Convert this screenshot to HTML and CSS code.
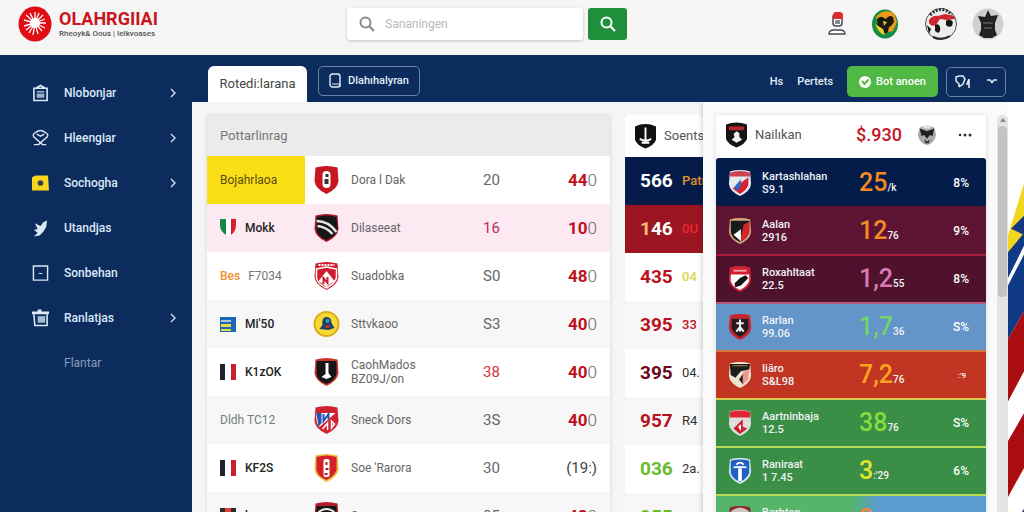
FILE: index.html
```html
<!DOCTYPE html>
<html lang="id">
<head>
<meta charset="utf-8">
<meta name="viewport" content="width=device-width, initial-scale=1">
<title>Olahrgilai</title>
<link rel="stylesheet" href="styles.css">
</head>
<body>
<svg class="defs" aria-hidden="true">
  <symbol id="shield" viewBox="0 0 26 30"><path d="M2 2.500Q13-.5 24 2.500L25 16Q24 24 13 29Q2 24 1 16Z"/></symbol>
  <symbol id="lens" viewBox="0 0 16 16"><circle cx="6.500" cy="6.500" r="5" fill="none" stroke="currentColor" stroke-width="2"/><path d="M10.300 10.300L15 15" stroke="currentColor" stroke-width="2.200"/></symbol>
  <symbol id="chev" viewBox="0 0 6 10"><path d="M1 1l4 4-4 4" fill="none" stroke="currentColor" stroke-width="1.300"/></symbol>
  <symbol id="tricolor" viewBox="0 0 17 18"><path d="M0 1h5v16H0z" fill="#1d2430"/><path d="M5 1h6v16H5z" fill="#fff"/><path d="M11 1h5v16h-5z" fill="#c8202c"/></symbol>
</svg>

<div class="app">
  <header class="top">
    <a class="brand" href="#">
      <svg class="brand-mark" viewBox="0 0 34 36"><ellipse cx="17" cy="18" rx="16.500" ry="17.500" fill="#e00d13"/><circle cx="17" cy="17" r="5" fill="#fff"/><path d="M17 17V6M17 17l4-10M17 17l8-8M17 17l10-4M17 17h11M17 17l10 5M17 17l7 8M17 17l3 11M17 17l-2 12M17 17l-6 10M17 17l-9 7M17 17L6 20M17 17L6 14M17 17L8 9M17 17l-5-10" stroke="#fff" stroke-width="1.300"/></svg>
      <span class="brand-text"><strong>OLAHRGIIAI</strong><small>Rheoyk&amp; Oous | Ielkvoases</small></span>
    </a>
    <form class="search">
      <label class="field"><svg><use href="#lens"/></svg><input type="text" placeholder="Sananingen" aria-label="Sananingen"></label>
      <button type="button" class="go" aria-label="Cari"><svg><use href="#lens"/></svg></button>
    </form>
    <div class="people">
      <svg class="p-user" viewBox="0 0 18 24"><rect x="5" y="2" width="9" height="12" rx="3" fill="#fff" stroke="#454a52" stroke-width="1.500"/><path d="M5 7V2l2-2h6l2 2v5z" fill="#dd2930"/><path d="M7 8h5v4H7z" fill="#8a8d92"/><path d="M1 22q0-4 5-4h6q5 0 5 4z" fill="#fff" stroke="#454a52" stroke-width="1.300"/></svg>
      <svg class="p-crest" viewBox="0 0 28 30"><ellipse cx="14" cy="15" rx="13" ry="14.500" fill="#168b43"/><path d="M5 8Q12-1 23 4L26 13 22 22 13 24 7 16z" fill="#f09a1c"/><path d="M6 10q4-4 7-1l2 1q3-5 7-2l1 5-3 4-2 1-1 5-4 2-2-5-4 1z" fill="#1c1a10"/><path d="M12 12l4 1-3 4z" fill="#e9c52c"/><path d="M4 15q4 10 10 11l-2-6z" fill="#e8d22a"/></svg>
      <svg class="p-ball" viewBox="0 0 32 34"><circle cx="16" cy="17" r="15.500" fill="#ececec" stroke="#555" stroke-width="1"/><path d="M5 8Q16-3 27 8" fill="none" stroke="#333" stroke-width="3" stroke-dasharray="2 1.500"/><path d="M4 13q4-5 9-4l7-2 9 2 1 3-8 1-7-1-4 6q-5 2-7-2z" fill="#cf2630"/><path d="M10 18q4-2 5 2t-2 6l-3-2zM21 14q4-3 7 1l-1 4q-4 2-6-1zM2 18l4 4-2 5z" fill="#151515"/><path d="M8 30q8 4 17-1" stroke="#222" stroke-width="2" fill="none"/></svg>
      <svg class="p-gray" viewBox="0 0 32 34"><circle cx="16" cy="17" r="15.500" fill="#cfcfd0"/><path d="M16 3l3 6 7-1-3 8v7l2 5-5 3h-8l-5-3 2-5V16l-3-7 7 1z" fill="#202123"/><path d="M11 16h10M12 21h8" stroke="#77787a"/></svg>
    </div>
  </header>

  <div class="body">
    <nav class="side">
      <a href="#"><svg viewBox="0 0 18 18"><path d="M2 4h14v13H2zM4 4l5-3 5 3" fill="none" stroke="currentColor" stroke-width="1.700"/><path d="M5 7h8v1.500H5zM5 9.500h8V14H5z" fill="currentColor" opacity=".7"/></svg><span>Nlobonjar</span><svg class="chev"><use href="#chev"/></svg></a>
      <a href="#"><svg viewBox="0 0 18 18"><path d="M9 14L2 8Q0 5 4 3q5-4 10 0 4 2 2 5l-7 6M5 5l4 2 4-2" fill="none" stroke="currentColor" stroke-width="1.500"/><path d="M2 16h5l2-2 2 2h4" fill="none" stroke="currentColor" stroke-width="1.500"/></svg><span>Hleengiar</span><svg class="chev"><use href="#chev"/></svg></a>
      <a href="#"><svg viewBox="0 0 18 18"><path d="M0 3l4-2h13l1 16H0z" fill="#f8d51f"/><circle cx="9" cy="9" r="3" fill="#35424f"/></svg><span>Sochogha</span><svg class="chev"><use href="#chev"/></svg></a>
      <a href="#"><svg viewBox="0 0 18 18"><path d="M3 4l6 3 3-4 4-2-1 7-3 5-4 4-6 1 4-4-4-3 4-1z" fill="currentColor"/></svg><span>Utandjas</span></a>
      <a href="#"><svg viewBox="0 0 18 18"><path d="M1.500 1.500h15v15h-15z" fill="none" stroke="currentColor" stroke-width="1.500"/><path d="M7 9.500h4" stroke="currentColor"/></svg><span>Sonbehan</span></a>
      <a href="#"><svg viewBox="0 0 18 18"><path d="M0 2h18v3H0zM6 0h4v2H6z" fill="currentColor"/><path d="M2 5l1 12h13V5" fill="none" stroke="currentColor" stroke-width="1.700"/><path d="M6 7h8v7H6z" fill="currentColor" opacity=".75"/></svg><span>Ranlatjas</span><svg class="chev"><use href="#chev"/></svg></a>
      <a href="#" class="dim"><i></i><span>Flantar</span></a>
    </nav>

    <main class="main">
      <div class="bar">
        <button type="button" class="tab">Rotedi:larana</button>
        <button type="button" class="ghost"><svg viewBox="0 0 12 16"><rect x="1" y="1" width="10" height="13" rx="2.500" fill="none" stroke="currentColor" stroke-width="1.400"/><path d="M3 11h8v3" fill="none" stroke="currentColor"/></svg>Dlahıhalyran</button>
        <div class="bar-right">
          <a href="#">Hs</a><a href="#">Pertets</a>
          <button type="button" class="green"><svg viewBox="0 0 12 12"><circle cx="6" cy="6" r="6" fill="#fff"/><path d="M3 5l2.500 3L9.500 3.500" fill="none" stroke="#4fb843" stroke-width="2"/></svg>Bot anoen</button>
          <button type="button" class="ghost drop"><svg viewBox="0 0 16 14"><path d="M4 12V9L1 6V2l3-1h4l2 3-2 5-4 3M14 4l-2 5h2M14 4v9" fill="none" stroke="currentColor" stroke-width="1.500"/></svg><svg class="caret" viewBox="0 0 10 5"><path d="M0 1h3l2 2.500L7 1h3" fill="none" stroke="currentColor" stroke-width="1.500"/></svg></button>
        </div>
      </div>

      <div class="content">
        <table class="card clubs">
          <colgroup><col class="c-code"><col><col class="c-num"><col class="c-val"></colgroup>
          <thead><tr><th colspan="4">Pottarlinrag</th></tr></thead>
          <tbody>
            <tr><td class="yellow">Bojahrlaoa</td><td><div class="club"><svg viewBox="0 0 26 30"><use href="#shield" fill="#c6161f"/><rect x="9" y="6" width="8" height="17" rx="4" fill="#fff"/><path d="M12 9h3v3h-3zM11 14h4v5h-4z" fill="#333"/></svg>Dora l Dak</div></td><td>20</td><td><b>44</b>0</td></tr>
            <tr class="pink"><td><div class="code"><svg viewBox="0 0 17 18"><path d="M0 0h6v16Q0 12 0 6z" fill="#168747"/><path d="M6 0h5v17l-3 1-2-2z" fill="#fff"/><path d="M11 0h5v6q0 6-5 10z" fill="#d12131"/></svg>Mokk</div></td><td><div class="club"><svg viewBox="0 0 26 30"><use href="#shield" fill="#a5162b"/><path d="M3 4q10-3 20 0l1 12q-1 7-11 11Q3 23 3 16z" fill="#171717"/><path d="M3 8q12 0 20 11M4 13q9 1 15 8" fill="none" stroke="#e3e3e3" stroke-width="2.600"/></svg>Dilaseeat</div></td><td>16</td><td><b>10</b>0</td></tr>
            <tr><td><div class="code mid"><em>Bes</em>F7034</div></td><td><div class="club"><svg viewBox="0 0 26 30"><use href="#shield" fill="#cf1b2b"/><path d="M5 4h16" stroke="#fff" stroke-width="2" stroke-dasharray="2 1"/><path d="M3 8l10-2 10 2v9q-2 6-10 10Q4 23 3 17z" fill="none" stroke="#fff" stroke-width="1.500"/><path d="M5 20l8-10 8 10-8 6z" fill="#fff"/><path d="M10 23v-6l4 5v-6" fill="none" stroke="#cf1b2b" stroke-width="2"/></svg>Suadobka</div></td><td>S0</td><td><b>48</b>0</td></tr>
            <tr><td><div class="code"><svg viewBox="0 0 17 18"><path d="M0 2h16v15H0z" fill="#1d66b5"/><path d="M1 9h10v3H1zM1 14h10v2H1z" fill="#e9dc3b"/><path d="M1 5h10v2H1z" fill="#a9c7db"/></svg>Mi'50</div></td><td><div class="club"><svg viewBox="0 0 26 30"><circle cx="13" cy="15" r="13" fill="#dcae1d"/><circle cx="13" cy="15" r="11" fill="#f7d934"/><path d="M6 20l3-4q-1-8 4-8t5 6l3 5-6 2z" fill="#213e69"/><circle cx="14" cy="12" r="2" fill="#36a0b9"/><path d="M12 16h4v3h-4z" fill="#b73525"/></svg>Sttvkaoo</div></td><td>S3</td><td><b>40</b>0</td></tr>
            <tr><td><div class="code"><svg><use href="#tricolor"/></svg>K1zOK</div></td><td><div class="club"><svg viewBox="0 0 26 30"><use href="#shield" fill="#c9362a"/><path d="M3 4h20v13q-2 7-10 10Q4 24 3 17z" fill="#151515"/><path d="M12 6h3v10l3 4-5 2-5-2 4-3z" fill="#fff"/></svg><span>CaohMados<br>BZ09J/on</span></div></td><td class="red">38</td><td><b>40</b>0</td></tr>
            <tr><td><span class="greenish">Dldh TC12</span></td><td><div class="club"><svg viewBox="0 0 26 30"><use href="#shield" fill="#d02230"/><path d="M3 8h19L6 22Q2 18 3 8z" fill="#fff"/><path d="M3 8h5v10l-3 4z" fill="#2252b2"/><path d="M10 9v7l5-7v5" fill="none" stroke="#2252b2" stroke-width="2"/><path d="M9 24l5-6v7M18 16v7l3-4z" fill="none" stroke="#fff" stroke-width="1.500"/></svg>Sneck Dors</div></td><td>3S</td><td><b>40</b>0</td></tr>
            <tr><td><div class="code"><svg><use href="#tricolor"/></svg>KF2S</div></td><td><div class="club"><svg viewBox="0 0 26 30"><use href="#shield" fill="#f0b735"/><path d="M3 4q10-3 20 0v13q-2 6-10 10Q4 23 3 17z" fill="#d3202a"/><rect x="10" y="6" width="6" height="18" rx="2" fill="#fff"/><path d="M12 9h2v3h-2zM12 15h3v2h-3zM11 20h3v2h-3z" fill="#a52023"/></svg>Soe 'Rarora</div></td><td>30</td><td class="paren">(19:)</td></tr>
            <tr><td><div class="code"><svg viewBox="0 0 17 18"><path d="M0 1h16v16H0z" fill="#2b2b31"/><path d="M5 1h6v16H5z" fill="#e24035"/></svg>kuwo</div></td><td><div class="club"><svg viewBox="0 0 26 30"><use href="#shield" fill="#b41d2b"/><path d="M3 5h20v12l-10 10-10-9z" fill="#181818"/><path d="M5 11q8-6 16 0M6 15q7-4 14 0" fill="none" stroke="#eee" stroke-width="2"/></svg>Swuonoro</div></td><td>85</td><td><b>48</b>0</td></tr>
          </tbody>
        </table>

        <div class="clip">
        <table class="card scores">
          <colgroup><col class="c-score"><col></colgroup>
          <thead><tr><th colspan="2"><div class="club"><svg viewBox="0 0 22 26"><path d="M0 3q11-5 22 0v14q-2 6-11 9Q2 23 0 17z" fill="#111"/><path d="M11 4v13M5 16q6 4 12 0M7 20h8" stroke="#fff" stroke-width="2" fill="none"/></svg>Soents</div></th></tr></thead>
          <tbody>
            <tr class="s-navy"><td>566</td><td>Patı</td></tr>
            <tr class="s-red"><td><i>1</i>46</td><td>0U</td></tr>
            <tr class="s-lemon"><td>435</td><td>04</td></tr>
            <tr class="s-crimson"><td>395</td><td>33</td></tr>
            <tr class="s-wine"><td>395</td><td>04.</td></tr>
            <tr><td>957</td><td>R4</td></tr>
            <tr class="s-green"><td>036</td><td>2a.</td></tr>
            <tr class="s-green"><td>955</td><td>54</td></tr>
          </tbody>
        </table>
        </div>

        <aside class="drawer">
          <div class="card rank">
            <div class="rank-head">
              <svg class="rh-logo" viewBox="0 0 22 26"><path d="M0 2q11-4 22 0v15q-2 6-11 9Q2 23 0 17z" fill="#181414"/><path d="M3 4h16v4H3z" fill="#b9252b"/><path d="M8 12l3-3 3 2v4l3 3-6 3-5-3 3-3z" fill="#f1f1f1"/></svg>
              <span>Nailıkan</span><strong>$.930</strong>
              <svg class="rh-face" viewBox="0 0 20 24"><path d="M2 4q8-5 16 0l2 8q-2 9-10 11Q2 21 0 12z" fill="#a9aaab"/><path d="M2 5l8 3 8-3-2 8-3-1-3 4-3-4-3 1z" fill="#202020"/><path d="M6 2h8v3H6z" fill="#e6e6e6"/><path d="M7 17l3 2 3-2-1 4H8z" fill="#333"/></svg>
              <button type="button" class="more" aria-label="Menu"><svg viewBox="0 0 14 4"><circle cx="2" cy="2" r="1.300"/><circle cx="7" cy="2" r="1.500"/><circle cx="12" cy="2" r="1.500"/></svg></button>
            </div>
            <ul>
              <li class="r1"><svg viewBox="0 0 26 30"><use href="#shield" fill="#e6e8ef"/><path d="M2 4q11-4 22 0v4H2z" fill="#cb4250"/><path d="M5 21L22 9v8q-2 6-9 10z" fill="#d5202e"/><path d="M7 19l7-8v7l-5 6z" fill="#276bc8"/></svg><p>Kartashlahan<br>S9.1</p><b>25<sub>/k</sub></b><span>8%</span></li>
              <li class="r2"><svg viewBox="0 0 26 30"><use href="#shield" fill="#d4a87e"/><path d="M3 4h20v12q-2 7-10 11Q4 23 3 16z" fill="#1a1a1a"/><path d="M17 8l6-3v11q-2 7-10 11z" fill="#d8232b"/><path d="M6 19l8-6v13z" fill="#fff"/></svg><p>Aalan<br>2916</p><b>12<sub>76</sub></b><span>9%</span></li>
              <li class="r3"><svg viewBox="0 0 26 30"><use href="#shield" fill="#d32031"/><path d="M3 10h20v7q-2 6-10 10Q4 23 3 17z" fill="#fff"/><path d="M7 20l6-6 6-3 3 3-8 8-6 2z" fill="#151515"/><path d="M6 6h14" stroke="#f0a5a9" stroke-width="2"/></svg><p>Roxahltaat<br>22.5</p><b>1,2<sub>55</sub></b><span>8%</span></li>
              <li class="r4"><svg viewBox="0 0 26 30"><use href="#shield" fill="#c6252d"/><path d="M4 6h18v11q-2 5-9 9-7-4-9-9z" fill="#241a20"/><path d="M13 7v13M9 11h8M9 20l4-5 4 5" stroke="#eee" stroke-width="2.200" fill="none"/></svg><p>Rarlan<br>99.06</p><b>1,7<sub>36</sub></b><span>S%</span></li>
              <li class="r5"><svg viewBox="0 0 26 30"><use href="#shield" fill="#efe3d2"/><path d="M2 3h22l-1 6-9 2-6 7-5-3z" fill="#1d1d1b"/><path d="M5 5h16" stroke="#b99445"/><path d="M16 12l7-3-1 11-7 6z" fill="#ef9990"/><path d="M12 20l4-6v11z" fill="#222"/></svg><p>Iiāro<br>S&amp;L98</p><b>7,2<sub>76</sub></b><span class="tiny">:'9</span></li>
              <li class="r6"><svg viewBox="0 0 26 30"><use href="#shield" fill="#dedede"/><path d="M2 3q11-3 22 0v6H2z" fill="#df2834"/><path d="M6 21l10-10v8l5 2-8 6z" fill="#c92030"/><path d="M11 19l3-3v8z" fill="#fff"/></svg><p>Aartninbaja<br>12.5</p><b>38<sub>76</sub></b><span>S%</span></li>
              <li class="r7"><svg viewBox="0 0 26 30"><use href="#shield" fill="#d6e6f4"/><path d="M3 4q10-3 20 0v13q-2 6-10 10Q4 23 3 17z" fill="#1f61c1"/><path d="M11 12h4v14h-4z" fill="#fff"/><path d="M6 11q7-1 14 0M9 8q4-4 8 0" stroke="#fff" stroke-width="2" fill="none"/></svg><p>Raniraat<br>1 7.45</p><b>3<sub>:'29</sub></b><span>6%</span></li>
              <li class="r8"><svg viewBox="0 0 26 30"><use href="#shield" fill="#8d2830"/><path d="M2 8q11-11 22 0l-3 4H4z" fill="#d2c6bc"/><path d="M6 13h14v7H6z" fill="#2d2222"/></svg><p>Barhten<br>19.5</p><b>2<sub>21</sub></b><span>9%</span></li>
            </ul>
          </div>
          <div class="scroll"><i></i></div>
        </aside>

        <svg class="art" viewBox="0 0 16 410" preserveAspectRatio="none" aria-hidden="true">
          <path d="M0 0h16v410H0z" fill="#fff"/>
          <path d="M16 76L0 124v18l16-16z" fill="#f2d51e"/>
          <path d="M16 122L0 140v81l16-26z" fill="#103a86"/>
          <path d="M16 106L3 118l13 6z" fill="#14377f"/>
          <path d="M16 134L0 164v7l16-29z" fill="#fff"/>
          <path d="M16 195L0 221v58l16-28z" fill="#a90d12"/>
          <path d="M16 290L0 316v52l16-27z" fill="#a90d12"/>
          <path d="M16 379L0 404v6h16z" fill="#103a86"/>
        </svg>
      </div>
    </main>
  </div>
</div>
</body>
</html>
```
FILE: styles.css
```css
* { box-sizing: border-box; }
body { margin: 0; font: 12px/16px Roboto, "Liberation Sans", sans-serif; color: #333; background: #f7f7f7; }
button, input { font: inherit; }
a { color: inherit; text-decoration: none; }
svg { display: block; flex: none; }
.defs { position: absolute; width: 0; height: 0; }
.app { height: 100vh; display: flex; flex-direction: column; overflow: hidden; }

.top { flex: none; min-height: 55px; padding: 0 20px 8px 18px; display: grid; grid-template-columns: 329px 1fr auto; align-items: center; background: #f5f5f5; }
.brand { display: flex; align-items: center; gap: 7px; }
.brand-mark { width: 34px; height: 36px; }
.brand-text { display: flex; flex-direction: column; }
.brand-text strong { font-size: 18px; line-height: 20px; color: #c9151e; }
.brand-text small { font-size: 8px; line-height: 10px; font-weight: 500; color: #555; }
.search { display: flex; gap: 5px; }
.field { display: flex; align-items: center; gap: 10px; width: 236px; height: 32px; padding-left: 12px; background: #fff; border-radius: 3px; box-shadow: 0 1px 3px #0003; color: #8b8b8b; }
.field svg, .go svg { width: 16px; height: 16px; }
.field input { flex: 1; min-width: 0; border: 0; outline: 0; background: none; padding: 0; }
.field input::placeholder { color: #b9b9b9; }
.go { width: 39px; height: 32px; padding: 0; border: 0; border-radius: 3px; background: #208f3c; color: #fff; display: flex; align-items: center; justify-content: center; }
.people { display: flex; align-items: center; }
.p-user { width: 18px; height: 24px; margin-right: 25px; }
.p-crest { width: 28px; height: 30px; margin-right: 26px; }
.p-ball { width: 32px; height: 34px; margin-right: 15px; }
.p-gray { width: 32px; height: 34px; }

.body { flex: 1; min-height: 0; display: grid; grid-template-columns: 192px minmax(0, 1fr); background: #0b2c5c; }
.side { padding: 15px 16px 0 32px; color: #dce8f8; }
.side a { display: flex; align-items: center; gap: 15px; height: 45px; font-weight: 500; }
.side svg, .side i { width: 17px; height: 18px; }
.side span { flex: 1; }
.side .chev { width: 6px; height: 10px; }
.side .dim { color: #8b9dbd; font-weight: 400; }

.main { display: flex; flex-direction: column; min-height: 0; }
.bar { flex: none; height: 47px; padding: 11px 18px 0 16px; display: flex; align-items: flex-start; color: #e4ecf8; }
.tab { width: 99px; height: 36px; padding: 0; border: 0; border-radius: 6px 6px 0 0; background: #fff; color: #444; font-size: 13px; }
.ghost { height: 30px; margin-left: 11px; padding: 0 10px; display: flex; align-items: center; gap: 7px; border: 1px solid #6982aa; border-radius: 5px; background: none; color: #e4ecf8; font-size: 11px; font-weight: 500; }
.ghost svg { width: 12px; height: 16px; }
.bar-right { margin-left: auto; display: flex; align-items: center; font-size: 11px; font-weight: 500; }
.bar-right a { margin-right: 14px; }
.green { height: 31px; padding: 0 12px; display: flex; align-items: center; gap: 5px; border: 0; border-radius: 5px; background: #50b943; color: #fff; font-weight: 500; }
.green svg { width: 12px; height: 12px; }
.drop { width: 60px; margin-left: 8px; padding: 0 8px; justify-content: space-between; }
.drop svg { width: 16px; height: 14px; }
.drop .caret { width: 10px; height: 5px; }

.content { flex: 1; min-height: 0; display: grid; grid-template-columns: minmax(0, 1fr) 78px 305px 16px; background: #f5f5f6; overflow: hidden; }
.card { background: #fff; box-shadow: 0 0 4px #0002; border-radius: 3px; }
table { border-collapse: collapse; table-layout: fixed; width: 100%; }
th { font-weight: 400; text-align: left; }
td { padding: 0; height: 48px; }
.club, .code { display: flex; align-items: center; }

.clubs { width: auto; margin: 13px 15px 0; align-self: start; color: #666; }
.clubs th { height: 41px; padding: 0 13px; background: #ebebec; font-size: 13px; color: #777; }
.clubs .c-code { width: 98px; }
.clubs .c-num { width: 60px; }
.clubs .c-val { width: 72px; }
.clubs tr:nth-child(even) td { background: #f7f7f7; }
.clubs tr.pink td { background: #fce9f2; }
.clubs td:first-child { padding-left: 13px; }
.clubs td.yellow { background: #fadf16; color: #5b4a10; }
.clubs td:nth-child(2) { padding-left: 8px; }
.clubs .club { gap: 11px; }
.clubs .club svg { width: 27px; height: 30px; }
.clubs .club span { line-height: 14px; }
.code { gap: 8px; color: #222; font-weight: 500; }
.code.mid { color: #777; font-weight: 400; }
.code em { font-style: normal; font-weight: 500; color: #ec922f; }
.code svg { width: 17px; height: 18px; }
.greenish { color: #6e8176; }
.clubs td:nth-child(3) { font-size: 15px; padding-left: 5px; }
.clubs .pink td:nth-child(3) { color: #c02a62; }
.clubs td.red { color: #d2303a; }
.clubs td:nth-child(4) { padding-right: 13px; text-align: right; font-size: 17px; font-weight: 300; }
.clubs b { font-weight: 700; color: #bd1220; }
.clubs td.paren { font-size: 15px; font-weight: 400; color: #444; }

.clip { margin-top: 13px; overflow: hidden; }
.scores { width: 100%; }
.scores .c-score { width: 57px; }
.scores th { height: 42px; padding: 0 0 0 10px; }
.scores .club { gap: 8px; white-space: nowrap; font-size: 13px; color: #555; }
.scores .club svg { width: 21px; height: 26px; }
.scores td { font-size: 13px; white-space: nowrap; color: #333; }
.scores td:first-child { padding-left: 15px; font-size: 19px; font-weight: 700; color: #b9111e; }
.scores tr:nth-child(even) td { background: #f7f7f7; }
.scores tr.s-navy td { background: #041b49; color: #e08d32; font-weight: 500; }
.scores tr.s-red td { background: #9c1523; color: #f0262c; font-weight: 500; }
.scores tr.s-navy td:first-child, .scores tr.s-red td:first-child { color: #fff; font-weight: 700; }
.scores .s-red i { font-style: normal; color: #f6bd77; }
.scores .s-lemon td:last-child { color: #dad54a; font-weight: 500; }
.scores .s-crimson td:last-child { color: #ba1627; font-weight: 500; }
.scores .s-wine td:first-child { color: #6d0620; }
.scores .s-green td:first-child { color: #69bb32; }

.drawer { display: flex; padding: 13px 0 0 13px; background: #fafafa; box-shadow: -2px 0 4px #0002; }
.rank { flex: 1; align-self: flex-start; }
.rank-head { height: 43px; padding: 0 12px 4px 10px; display: grid; grid-template-columns: 29px 101px 61px 41px 1fr; align-items: center; font-size: 13px; color: #555; }
.rh-logo { width: 21px; height: 26px; }
.rh-face { width: 20px; height: 22px; }
.rank-head strong { font-size: 18px; font-weight: 500; color: #c6141f; }
.more { padding: 0; border: 0; background: none; }
.more svg { width: 14px; height: 4px; fill: #333; }
.rank ul { list-style: none; margin: 0; padding: 0; }
.rank li { height: 48px; padding: 0 17px 0 12px; display: grid; grid-template-columns: 34px 97px 1fr auto; align-items: center; border-top: 2px solid; color: #fff; font-size: 12px; font-weight: 500; line-height: 13px; }
.rank li svg { width: 24px; height: 28px; }
.rank p { margin: 0; font-size: 11px; white-space: nowrap; color: #eef2f6; }
.rank b { font-size: 25px; line-height: 30px; font-weight: 500; }
.rank sub { font-size: 10px; line-height: 11px; vertical-align: baseline; color: #f3f3f3; }
.rank span.tiny { font-size: 8px; padding-right: 3px; }
.rank .r1 { background: #031c4a; border-color: #031c4a; border-radius: 3px 3px 0 0; }
.rank .r2 { background: #5d1433; border-color: #5d1433; }
.rank .r3 { background: #4f122d; border-color: #a81c3a; }
.rank .r4 { background: #6395c8; border-color: #b9587f; }
.rank .r5 { background: #c13522; border-color: #d9743d; }
.rank .r6 { background: #3a8e45; border-color: #d3c94c; }
.rank .r7 { background: #3a8e45; border-color: #b9da55; }
.rank .r8 { background: linear-gradient(90deg, #55b56b 50%, #5b9cd0 60%); border-color: #b9da55; }
.r1 b, .r2 b { color: #f58a20; }
.r3 b { color: #dc79b4; }
.r4 b { color: #6fd46a; }
.r5 b { color: #fba31f; }
.r6 b { color: #86dc3c; }
.r7 b { color: #e3e52f; }
.r8 b { color: #ee8540; }
.scroll { width: 11px; margin-left: 11px; background: #e4e4e6; border-radius: 5px; }
.scroll::before { content: ""; display: block; margin: 3px auto 4px; width: 0; border: 3px solid transparent; border-top: 0; border-bottom: 4px solid #888; }
.scroll i { display: block; height: 40%; margin: 0 1px; border-radius: 4px; background: #c3c3c6; }
.art { width: 100%; height: 100%; }
```
